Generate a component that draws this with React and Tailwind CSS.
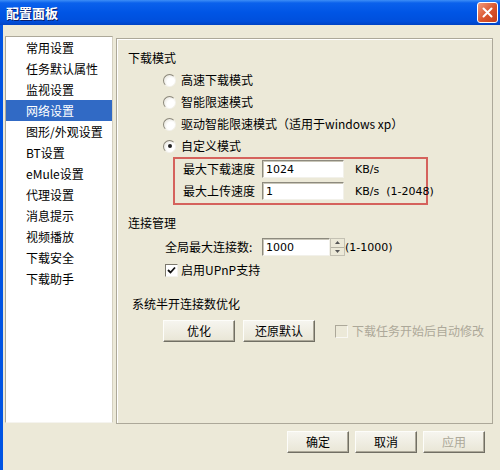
import React from "react";

const font = { fontFamily: '"Noto Sans CJK SC", "Liberation Sans", sans-serif' };
const latin = { fontFamily: '"DejaVu Sans", "Liberation Sans", sans-serif' };

function Radio({ checked }) {
  return (
    <span className="relative inline-flex w-[13px] h-[13px] shrink-0 rounded-full border border-t-[#8a877a] border-l-[#8a877a] border-b-[#f4f3ee] border-r-[#f4f3ee] bg-[radial-gradient(circle_at_65%_65%,#ffffff_40%,#dcd9cc_100%)] items-center justify-center">
      {checked && <span className="w-[4px] h-[4px] rounded-full bg-[#222]" />}
    </span>
  );
}

function Check({ checked, disabled }) {
  return (
    <span
      className={
        "inline-flex w-[13px] h-[13px] shrink-0 border items-center justify-center " +
        (disabled
          ? "border-t-[#aca899] border-l-[#aca899] border-b-[#f8f7f2] border-r-[#f8f7f2] bg-[#ece9d8]"
          : "border-t-[#7b786c] border-l-[#7b786c] border-b-[#f4f3ee] border-r-[#f4f3ee] bg-white")
      }
    >
      {checked && (
        <svg width="9" height="9" viewBox="0 0 9 9">
          <path d="M1 4 L3.5 6.5 L8 1.5" stroke="#111" strokeWidth="1.8" fill="none" />
        </svg>
      )}
    </span>
  );
}

function Input({ value, w = "w-[82px]" }) {
  return (
    <div
      className={
        w +
        " h-[18px] shrink-0 bg-white border border-t-[#8d8a7e] border-l-[#8d8a7e] border-b-[#f2f1ea] border-r-[#f2f1ea] shadow-[inset_1px_1px_0_#c9c6b8] flex items-center pl-[3px] text-[11px] leading-none text-black"
      }
      style={latin}
    >
      {value}
    </div>
  );
}

function Btn({ children, w = "w-[72px]", disabled }) {
  return (
    <div
      className={
        w +
        " h-[22px] shrink-0 flex items-center justify-center text-[12px] border border-t-[#fdfdfa] border-l-[#fdfdfa] border-b-[#716f64] border-r-[#716f64] shadow-[inset_-1px_-1px_0_#aca899] bg-[linear-gradient(to_bottom,#f6f5ef,#e9e6d6)] " +
        (disabled ? "text-[#aca899]" : "text-black")
      }
    >
      {children}
    </div>
  );
}

const items = [
  "常用设置",
  "任务默认属性",
  "监视设置",
  "网络设置",
  "图形/外观设置",
  "BT设置",
  "eMule设置",
  "代理设置",
  "消息提示",
  "视频播放",
  "下载安全",
  "下载助手",
];

export default function App() {
  return (
    <div className="w-[500px] h-[470px] overflow-hidden bg-[#ece9d8] flex flex-col text-black" style={font}>
      {/* Title bar */}
      <div className="h-[25px] shrink-0 flex items-center justify-between pl-[6px] pr-[2px] bg-[linear-gradient(to_bottom,#3d8ef6_0%,#0a61ec_12%,#0055e5_50%,#004fdc_85%,#0043c4_100%)]">
        <span className="text-white font-bold text-[13px] leading-none [text-shadow:1px_1px_0_#0a1f6b]">配置面板</span>
        <div className="w-[21px] h-[21px] rounded-[3px] border border-white bg-[linear-gradient(to_bottom_right,#f29a7c,#d9542c_55%,#c4401c)] flex items-center justify-center">
          <svg width="11" height="11" viewBox="0 0 11 11">
            <path d="M1.5 1.5 L9.5 9.5 M9.5 1.5 L1.5 9.5" stroke="white" strokeWidth="2" strokeLinecap="round" />
          </svg>
        </div>
      </div>

      {/* Body */}
      <div className="flex-1 flex flex-col border-l-[3px] border-[#0054e3]">
        <div className="flex pt-[11px] pl-[2px] gap-[3px]">
          {/* List */}
          <div className="w-[108px] h-[387px] bg-white border border-t-[#aca899] border-l-[#aca899] border-b-[#f5f4ef] border-r-[#d4d0c0] flex flex-col">
            {items.map((t, i) => (
              <div
                key={t}
                className={
                  "h-[21px] shrink-0 flex items-center pl-[20px] text-[12px] leading-none " +
                  (i === 3 ? "bg-[#316ac5] text-white" : "text-black")
                }
              >
                {t}
              </div>
            ))}
          </div>

          {/* Panel */}
          <div className="w-[377px] h-[386px] mt-[2px] border border-[#aca899] shadow-[inset_1px_1px_0_#fff] flex flex-col text-[12px] leading-none whitespace-nowrap">
            <div className="h-[16px] mt-[11px] ml-[11px] flex items-center">下载模式</div>

            <div className="mt-[3px] flex flex-col ml-[46px]">
              {[
                ["高速下载模式", false],
                ["智能限速模式", false],
                ["驱动智能限速模式（适用于windows xp）", false],
                ["自定义模式", true],
              ].map(([t, c]) => (
                <div key={t} className="h-[22px] flex items-center gap-[5px]">
                  <Radio checked={c} />
                  <span>{t}</span>
                </div>
              ))}
            </div>

            <div className="ml-[56px] w-[255px] border-2 border-[#d5625c] pt-[1px] pb-[3px] pl-[8px] flex flex-col gap-[4px]">
              <div className="h-[18px] flex items-center">
                <span className="w-[79px] shrink-0">最大下载速度</span>
                <Input value="1024" />
                <span className="ml-[11px] text-[11px]" style={latin}>KB/s</span>
              </div>
              <div className="h-[18px] flex items-center">
                <span className="w-[79px] shrink-0">最大上传速度</span>
                <Input value="1" />
                <span className="ml-[11px] text-[11px]" style={latin}>KB/s&nbsp;&nbsp;(1-2048)</span>
              </div>
            </div>

            <div className="h-[16px] mt-[10px] ml-[11px] flex items-center">连接管理</div>

            <div className="h-[18px] mt-[7px] ml-[48px] flex items-center">
              <span className="w-[97px] shrink-0">全局最大连接数:</span>
              <div className="flex h-[18px] shrink-0">
                <Input value="1000" w="w-[68px]" />
                <div className="w-[15px] h-[18px] flex flex-col border border-[#c4c1b3] bg-[#ece9d8]">
                  <div className="flex-1 flex items-center justify-center border-b border-[#b5b2a3]">
                    <svg width="5" height="3" viewBox="0 0 5 3"><path d="M0 3 L2.5 0 L5 3 Z" fill="#555" /></svg>
                  </div>
                  <div className="flex-1 flex items-center justify-center">
                    <svg width="5" height="3" viewBox="0 0 5 3"><path d="M0 0 L2.5 3 L5 0 Z" fill="#555" /></svg>
                  </div>
                </div>
              </div>
              <span className="text-[11px]" style={latin}>(1-1000)</span>
            </div>

            <div className="h-[16px] mt-[6px] ml-[48px] flex items-center gap-[3px]">
              <Check checked />
              <span>启用UPnP支持</span>
            </div>

            <div className="h-[16px] mt-[18px] ml-[15px] flex items-center">系统半开连接数优化</div>

            <div className="mt-[8px] ml-[46px] flex items-center">
              <Btn>优化</Btn>
              <div className="ml-[8px]"><Btn>还原默认</Btn></div>
              <div className="ml-[20px] flex items-center gap-[4px] text-[#aca899]">
                <Check disabled />
                <span>下载任务开始后自动修改</span>
              </div>
            </div>
          </div>
        </div>

        {/* Bottom buttons */}
        <div className="mt-[7px] flex justify-end gap-[6px] pr-[15px]">
          <Btn w="w-[62px]">确定</Btn>
          <Btn w="w-[62px]">取消</Btn>
          <Btn w="w-[62px]" disabled>应用</Btn>
        </div>
      </div>
    </div>
  );
}
